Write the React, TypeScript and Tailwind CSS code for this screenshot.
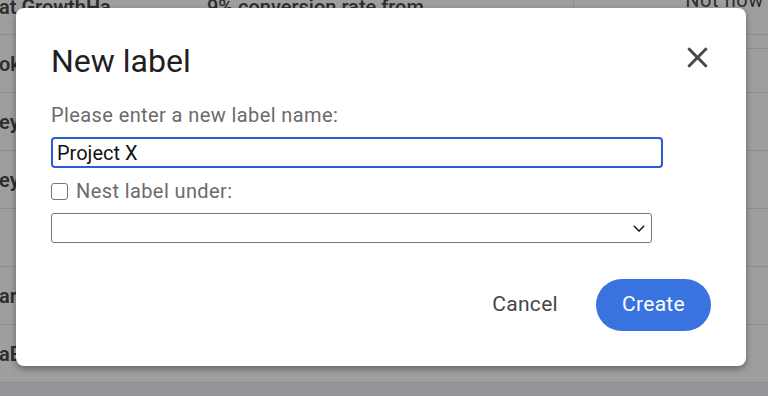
import React from "react";

const rows = [
    { left: "ok", mid: "" },
    { left: "ey", mid: "" },
    { left: "ey", mid: "" },
    { left: "", mid: "" },
    { left: "ark", mid: "" },
    { left: "aB", mid: "" },
];

function CloseIcon() {
    return (
        <svg viewBox="0 0 24 24" className="w-[35px] h-[35px]" fill="#474747">
            <path d="M19 6.41L17.59 5 12 10.59 6.41 5 5 6.41 10.59 12 5 17.59 6.41 19 12 13.41 17.59 19 19 17.59 13.41 12z" />
        </svg>
    );
}

function Chevron() {
    return (
        <svg viewBox="0 0 12 7" className="w-[12px] h-[7px]" fill="none" stroke="#202124" strokeWidth="1.6">
            <path d="M0.8 0.8 L6 6 L11.2 0.8" />
        </svg>
    );
}

// background mail list, dimmed by the scrim
function MailList() {
    return (
        <div className="flex flex-col h-full">
            <div className="h-[35px] flex border-b border-[#e4e4e4] shrink-0">
                <div className="flex-1 flex text-[20px] leading-[24px] -mt-[5px] text-[#4a4a4a]">
                    <span className="-ml-[1px] w-[208px] font-semibold">at GrowthHa</span>
                    <span className="font-medium">9% conversion rate from</span>
                </div>
                <div className="w-[195px] h-[49px] border-l border-b border-[#e4e4e4] flex justify-end pr-[4px] shrink-0">
                    <span className="text-[20px] leading-[24px] -mt-[12px] tracking-[0.6px] text-[#4a4a4a]">Not now</span>
                </div>
            </div>
            {rows.map((r, i) => (
                <div
                    key={i}
                    className="h-[58px] flex items-center border-b border-[#e4e4e4] shrink-0"
                >
                    <span className="-ml-[1px] text-[20px] font-semibold text-[#4a4a4a]">{r.left}</span>
                </div>
            ))}
            <div className="flex-1 bg-[#eef1f6]" />
        </div>
    );
}

export default function App() {
    return (
        <div className="relative w-[768px] h-[396px] overflow-hidden bg-white font-['Roboto',sans-serif]">
            <MailList />
            <div className="absolute inset-0 bg-black/[0.38]" />

            <div className="absolute left-[16px] top-[8px] w-[730px] h-[358px] bg-white rounded-[8px] shadow-[0_3px_6px_rgba(0,0,0,0.35)] pl-[35px] pr-[35px] pt-[35px] pb-[35px] flex flex-col">
                <div className="flex items-start justify-between">
                    <h2 className="text-[32px] leading-[36px] text-[#1f1f1f]">New label</h2>
                    <button type="button" className="-mt-[3px] -mr-[4px]">
                        <CloseIcon />
                    </button>
                </div>

                <label className="mt-[24px] text-[20px] leading-[24px] tracking-[0.4px] text-[#6b6b6b]">
                    Please enter a new label name:
                </label>
                <div className="mt-[10px] w-[612px] h-[31px] border-2 border-[#2b5cd6] rounded-[4px] flex items-center pl-[4px]">
                    <span className="text-[20px] leading-[24px] text-[#111]">Project X</span>
                </div>

                <div className="mt-[11px] h-[24px] flex items-center gap-[8px]">
                    <div className="w-[17px] h-[17px] border border-[#767676] rounded-[3px]" />
                    <span className="text-[20px] leading-[24px] tracking-[0.4px] text-[#6b6b6b]">
                        Nest label under:
                    </span>
                </div>
                <div className="mt-[10px] w-[601px] h-[30px] border border-[#767676] rounded-[3px] flex items-center justify-end pr-[6px]">
                    <Chevron />
                </div>

                <div className="mt-[36px] flex justify-end items-center gap-[14px]">
                    <button
                        type="button"
                        className="h-[52px] px-[24px] rounded-full text-[21px] tracking-[0.3px] text-[#444746]"
                    >
                        Cancel
                    </button>
                    <button
                        type="button"
                        className="h-[52px] w-[115px] rounded-full bg-[#3873e0] text-white text-[21px] tracking-[0.3px]"
                    >
                        Create
                    </button>
                </div>
            </div>
        </div>
    );
}
